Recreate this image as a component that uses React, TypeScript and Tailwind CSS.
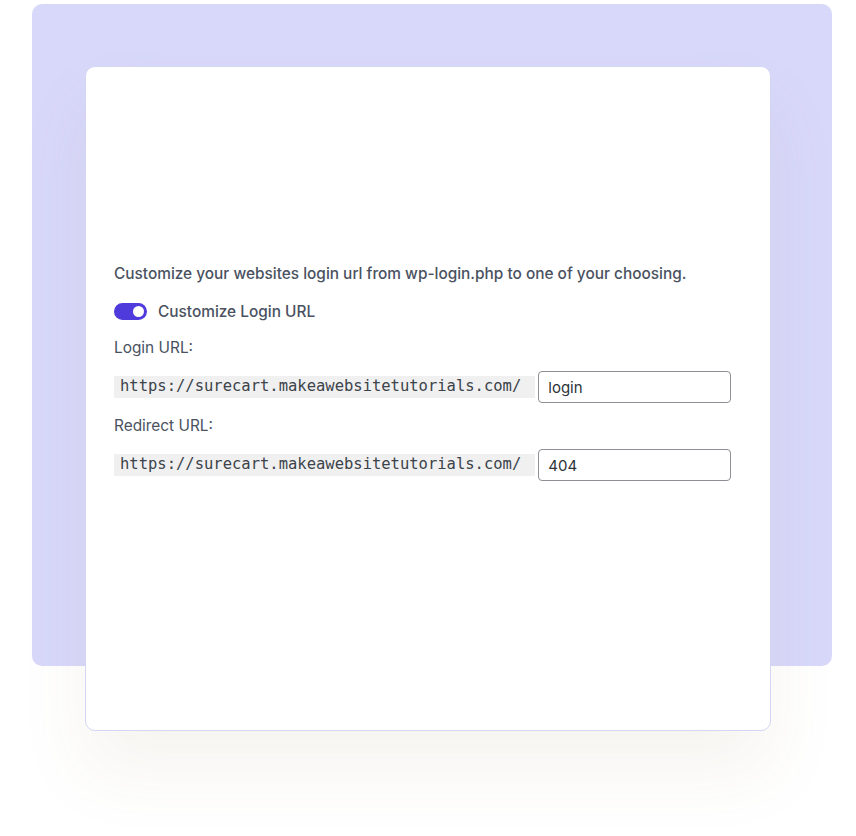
import React, { useState } from "react";

const UrlRow: React.FC<{ value: string }> = ({ value }) => {
  const [val, setVal] = useState(value);
  return (
    <div className="flex items-center">
      <code className="h-[22px] flex items-center bg-[#f0f0f1] pl-[6px] pr-[14px] text-[15.5px] text-[#3c434a] font-['DejaVu_Sans_Mono',monospace]">
        https://surecart.makeawebsitetutorials.com/
      </code>
      <input
        value={val}
        onChange={(e) => setVal(e.target.value)}
        className="ml-[3px] h-[32px] w-[193px] rounded-[4px] border border-[#8c8f94] bg-white px-[9px] text-[15px] text-[#2c3338] outline-none"
      />
    </div>
  );
};

const App: React.FC = () => {
  const [enabled, setEnabled] = useState(true);

  return (
    <div className="w-[856px] h-[836px] bg-white font-['Inter',sans-serif] pt-[4px] pl-[32px]">
      {/* lavender backdrop */}
      <div className="w-[800px] h-[662px] rounded-[10px] bg-[#d8d8fb] pt-[62px] pl-[53px]">
        {/* settings card */}
        <div className="w-[686px] h-[665px] rounded-[10px] border border-[#d4d6f5] bg-white pt-[198px] pl-[28px] shadow-[0_40px_70px_rgba(140,110,60,0.08)]">
          <p className="text-[15.4px] font-medium text-[#4a5261] leading-[18px]">
            Customize your websites login url from wp-login.php to one of your choosing.
          </p>

          <div className="mt-[17px] flex items-center">
            <button
              onClick={() => setEnabled(!enabled)}
              aria-label="Customize Login URL"
              className={
                enabled
                  ? "relative h-[17px] w-[33px] rounded-full bg-[#4f3bdc]"
                  : "relative h-[17px] w-[33px] rounded-full bg-gray-300"
              }
            >
              <span
                className={
                  enabled
                    ? "absolute top-[3px] left-[19px] h-[11px] w-[11px] rounded-full bg-white"
                    : "absolute top-[3px] left-[3px] h-[11px] w-[11px] rounded-full bg-white"
                }
              />
            </button>
            <span className="ml-[11px] text-[15.4px] font-medium text-[#4a5261]">Customize Login URL</span>
          </div>

          <div className="mt-[16px] text-[15.4px] text-[#4a5261] leading-[18px]">Login URL:</div>
          <div className="mt-[14px]">
            <UrlRow value="login" />
          </div>

          <div className="mt-[14px] text-[15.4px] text-[#4a5261] leading-[18px]">Redirect URL:</div>
          <div className="mt-[14px]">
            <UrlRow value="404" />
          </div>
        </div>
      </div>
    </div>
  );
};

export default App;
